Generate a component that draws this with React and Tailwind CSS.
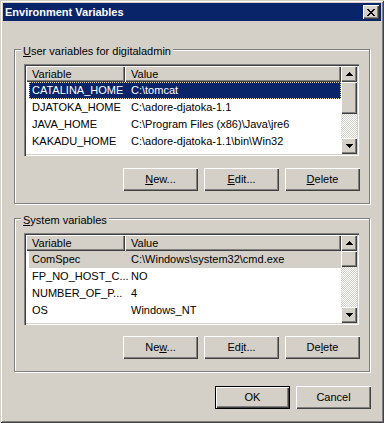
import React from "react";

const raised =
  "bg-[#d4d0c8] shadow-[inset_1px_1px_0_#fff,inset_-1px_-1px_0_#404040,inset_-2px_-2px_0_#808080]";
const header =
  "bg-[#d4d0c8] shadow-[inset_1px_1px_0_#fff,inset_-1px_-1px_0_#404040,inset_-2px_-2px_0_#808080]";

const userVars = [
  ["CATALINA_HOME", "C:\\tomcat"],
  ["DJATOKA_HOME", "C:\\adore-djatoka-1.1"],
  ["JAVA_HOME", "C:\\Program Files (x86)\\Java\\jre6"],
  ["KAKADU_HOME", "C:\\adore-djatoka-1.1\\bin\\Win32"],
  ["uar", "C:\\adore-djatoka-1.1\\lib"],
];

const systemVars = [
  ["ComSpec", "C:\\Windows\\system32\\cmd.exe"],
  ["FP_NO_HOST_C...", "NO"],
  ["NUMBER_OF_P...", "4"],
  ["OS", "Windows_NT"],
  ["Path", "C:\\Windows\\system32;C:\\Windows;C:\\Wi..."],
];

function Arrow({ up }) {
  return (
    <svg width="7" height="4" viewBox="0 0 7 4" shapeRendering="crispEdges">
      <polygon points={up ? "3.5,0 7,4 0,4" : "0,0 7,0 3.5,4"} fill="#000" />
    </svg>
  );
}

function ScrollBar({ thumb }) {
  return (
    <div className="w-[16px] flex flex-col shrink-0">
      <div className={`h-[16px] ${raised} flex items-center justify-center`}>
        <Arrow up />
      </div>
      <div className={`${thumb} ${raised}`}></div>
      <div className="flex-1 bg-[repeating-conic-gradient(#d4d0c8_0_25%,#fff_0_50%)] bg-[length:2px_2px]"></div>
      <div className={`h-[16px] ${raised} flex items-center justify-center`}>
        <Arrow />
      </div>
    </div>
  );
}

function ListView({ rows, selection, thumb }) {
  return (
    <div className="w-[335px] h-[92px] p-[2px] bg-white flex shadow-[inset_1px_1px_0_#808080,inset_2px_2px_0_#404040,inset_-1px_-1px_0_#fff,inset_-2px_-2px_0_#d4d0c8]">
      <div className="flex-1 min-w-0 flex flex-col overflow-hidden">
        <div className="flex h-[16px] shrink-0 leading-[16px]">
          <div className={`w-[99px] pl-[6px] ${header}`}>Variable</div>
          <div className={`flex-1 pl-[6px] ${header}`}>Value</div>
        </div>
        {rows.map(([name, value], i) => {
          let rowCls = "text-black";
          if (i === 0 && selection === "active")
            rowCls =
              "bg-[#0a246a] text-white outline outline-1 outline-dotted outline-[#e8dc9c] -outline-offset-1";
          if (i === 0 && selection === "inactive") rowCls = "bg-[#d4d0c8] text-black";
          return (
            <div key={name} className={`ml-[3px] flex h-[17px] shrink-0 leading-[17px] whitespace-nowrap ${rowCls}`}>
              <span className="w-[102px] pl-[3px] shrink-0 overflow-hidden">{name}</span>
              <span className="flex-1 overflow-hidden">{value}</span>
            </div>
          );
        })}
      </div>
      <ScrollBar thumb={thumb} />
    </div>
  );
}

function Button({ children, def }) {
  if (def) {
    return (
      <div className="w-[75px] h-[23px] border border-black">
        <div className={`w-full h-full ${raised} flex items-center justify-center`}>{children}</div>
      </div>
    );
  }
  return (
    <div className={`w-[75px] h-[23px] ${raised} flex items-center justify-center`}>{children}</div>
  );
}

function GroupBox({ label, children, className = "" }) {
  return (
    <div
      className={`relative w-[356px] border border-[#808080] shadow-[inset_1px_1px_0_#fff,1px_1px_0_#fff] px-[9px] pt-[14px] ${className}`}
    >
      <span className="absolute left-[6px] top-[-6px] px-[2px] bg-[#d4d0c8] leading-[14px]">{label}</span>
      {children}
    </div>
  );
}

function CloseGlyph() {
  return (
    <svg width="8" height="7" viewBox="0 0 8 7" shapeRendering="crispEdges">
      <path
        fill="#000"
        d="M0 0h2v1H0zM6 0h2v1H6zM1 1h2v1H1zM5 1h2v1H5zM2 2h4v1H2zM3 3h2v1H3zM2 4h4v1H2zM1 5h2v1H1zM5 5h2v1H5zM0 6h2v1H0zM6 6h2v1H6z"
      />
    </svg>
  );
}

export default function App() {
  return (
    <div className="w-[384px] h-[423px] bg-[#d4d0c8] p-[3px] flex flex-col text-[11px] text-black font-['Liberation_Sans',Arial,sans-serif] shadow-[inset_1px_1px_0_#d4d0c8,inset_-1px_-1px_0_#404040,inset_2px_2px_0_#fff,inset_-2px_-2px_0_#808080]">
      <div className="h-[18px] bg-[#0a246a] flex items-start justify-between pl-[2px] pr-[2px]">
        <span className="text-white font-bold leading-[18px]">Environment Variables</span>
        <div className={`mt-[2px] w-[16px] h-[14px] ${raised} flex items-center justify-center`}>
          <CloseGlyph />
        </div>
      </div>

      <div className="pl-[11px] pt-[28px] flex flex-col">
        <GroupBox
          className="pb-[12px]"
          label={
            <>
              <u>U</u>ser variables for digitaladmin
            </>
          }
        >
          <ListView rows={userVars} selection="active" thumb="h-[32px]" />
          <div className="mt-[12px] flex justify-end gap-[6px]">
            <Button>
              <span>
                <u>N</u>ew...
              </span>
            </Button>
            <Button>
              <span>
                <u>E</u>dit...
              </span>
            </Button>
            <Button>
              <span>
                <u>D</u>elete
              </span>
            </Button>
          </div>
        </GroupBox>

        <GroupBox
          className="mt-[14px] pb-[12px]"
          label={
            <>
              <u>S</u>ystem variables
            </>
          }
        >
          <ListView rows={systemVars} selection="inactive" thumb="h-[16px]" />
          <div className="mt-[11px] flex justify-end gap-[6px]">
            <Button>
              <span>
                Ne<u>w</u>...
              </span>
            </Button>
            <Button>
              <span>
                Ed<u>i</u>t...
              </span>
            </Button>
            <Button>
              <span>
                De<u>l</u>ete
              </span>
            </Button>
          </div>
        </GroupBox>
      </div>

      <div className="mt-[14px] pr-[10px] flex justify-end gap-[6px]">
        <Button def>OK</Button>
        <Button>Cancel</Button>
      </div>
    </div>
  );
}
